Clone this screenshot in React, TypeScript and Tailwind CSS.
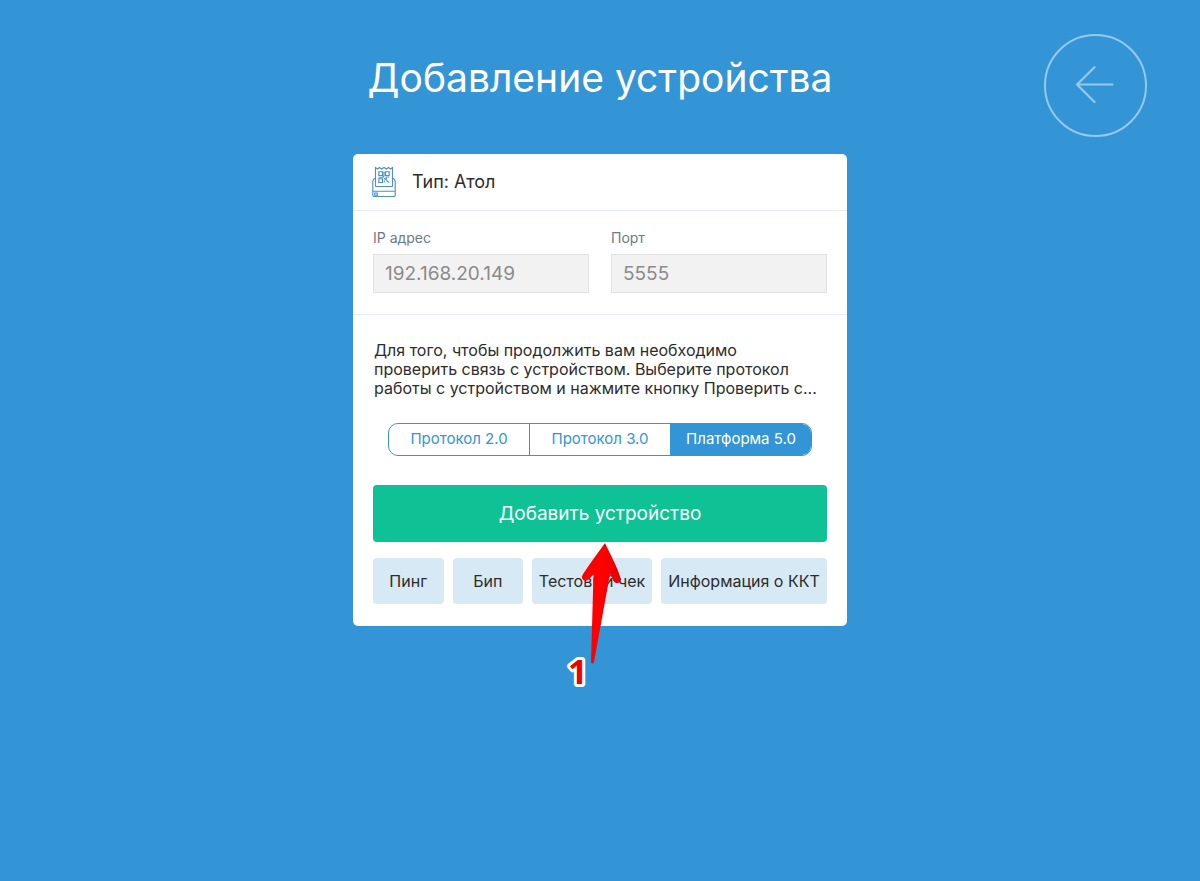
import React, { useState } from 'react';

const protocols = ['Протокол 2.0', 'Протокол 3.0', 'Платформа 5.0'];

const PrinterIcon: React.FC = () => (
  <svg className="h-8 w-6 shrink-0" viewBox="0 0 24 32" fill="none" stroke="#4a8fc9" strokeWidth="1.1" aria-hidden="true">
    {/* Paper with the torn edge */}
    <path d="M3.5 20.5V1.5l2 1.5 2-1.5 2 1.5 2.5-1.5L14.5 3l2-1.5 2 1.5 2-1.5v19" />
    {/* Body */}
    <path d="M3.5 12.5H2.3L.8 15v14.2c0 .8.6 1.3 1.4 1.3h19.6c.8 0 1.4-.5 1.4-1.3V15l-1.5-2.5h-1.2M3.5 20.5h17M.8 25.2h22.4" />
    <path d="M2.7 27h2.6v2.2H2.7z" />
    {/* QR code */}
    <path
      d="M6.8 5.8h3.7v3.7H6.8zM13.5 5.8h3.7v3.7h-3.7zM6.8 12.8h3.7v3.7H6.8zM12 5.5v4.5l-1.5 1.5M6.5 11.2h4M12 12.3l2.2 1.7v-3h3M14.5 14.5l2.5 2.2M12.3 14.5v2"
      strokeWidth="1.1"
    />
  </svg>
);

const BackButton: React.FC = () => (
  <button
    type="button"
    aria-label="Назад"
    className="flex h-[103px] w-[103px] items-center justify-center justify-self-end rounded-full border-2 border-[#95c9ec] text-[#95c9ec]"
  >
    <svg className="h-10 w-10" viewBox="0 0 40 40" fill="none" stroke="currentColor" strokeWidth="2.2" strokeLinecap="round" aria-hidden="true">
      <path d="M36.5 18.5H1M18.5 1.2L1 18.5l17.5 17.5" />
    </svg>
  </button>
);

interface FieldProps {
  id: string;
  label: string;
  value: string;
}

const Field: React.FC<FieldProps> = ({ id, label, value }) => (
  <div className="min-w-0 flex-1">
    <label htmlFor={id} className="block text-sm leading-5 text-[#6b7b85]">
      {label}
    </label>
    <input
      id={id}
      type="text"
      defaultValue={value}
      readOnly
      className="mt-1.5 block h-[39px] w-full border border-[#e2e2e2] bg-[#f2f2f2] px-[11px] text-[19px] text-[#8b8b8b] outline-none"
    />
  </div>
);

const App: React.FC = () => {
  const [protocol, setProtocol] = useState('Платформа 5.0');

  return (
    <div className="min-h-screen bg-[#3395d6] pb-10 font-['Inter','Liberation_Sans',sans-serif] text-[#2c2c2c]">
      <header className="grid grid-cols-[1fr_auto_1fr] items-start px-[53px] pt-[34px]">
        <h1 className="col-start-2 mt-5 text-[39px] leading-[48px] text-white">Добавление устройства</h1>
        <BackButton />
      </header>

      <main className="relative mx-auto mt-[17px] w-full max-w-[494px] rounded-[5px] bg-white">
        <div className="flex h-[57px] items-center gap-4 border-b border-[#e3eff7] px-[19px]">
          <PrinterIcon />
          <h2 className="text-lg leading-6">Тип: Атол</h2>
        </div>

        <div className="flex gap-[22px] border-b border-[#e3eff7] px-5 pt-[17px] pb-[21px]">
          <Field id="ip" label="IP адрес" value="192.168.20.149" />
          <Field id="port" label="Порт" value="5555" />
        </div>

        <div className="px-5 pt-[26px] pb-[22px]">
          <p className="px-px text-base leading-[19px] whitespace-nowrap">
            Для того, чтобы продолжить вам необходимо
            <br />
            проверить связь с устройством. Выберите протокол
            <br />
            работы с устройством и нажмите кнопку Проверить с...
          </p>

          {/* Protocol switch */}
          <div className="mx-[15px] mt-[25px] flex h-[33px] divide-x divide-[#3395d6] overflow-hidden rounded-[10px] border border-[#3395d6]">
            {protocols.map((name) => (
              <button
                key={name}
                type="button"
                aria-pressed={name === protocol}
                onClick={() => setProtocol(name)}
                className={
                  name === protocol
                    ? 'flex-1 bg-[#3395d6] text-[15px] whitespace-nowrap text-white'
                    : 'flex-1 text-[15px] whitespace-nowrap text-[#3395d6]'
                }
              >
                {name}
              </button>
            ))}
          </div>

          <button type="button" className="mt-[29px] h-[57px] w-full rounded bg-[#0fc296] pt-0.5 text-[19px] text-white">
            Добавить устройство
          </button>

          <div className="mt-4 flex h-[46px] gap-[9px] text-base whitespace-nowrap">
            <button type="button" className="flex-1 rounded-sm bg-[#d6e9f5]">Пинг</button>
            <button type="button" className="flex-1 rounded-sm bg-[#d6e9f5]">Бип</button>
            <button type="button" className="w-[120px] rounded-sm bg-[#d6e9f5]">Тестовый чек</button>
            <button type="button" className="w-[166px] rounded-sm bg-[#d6e9f5]">Информация о ККТ</button>
          </div>
        </div>

        {/* Step marker pointing at the main button */}
        <svg className="pointer-events-none absolute top-[389px] left-[212px] h-[164px] w-[60px] overflow-visible" viewBox="0 0 60 164">
          <defs>
            <linearGradient id="arrow" x1="0" x2="1" y1="0" y2="0">
              <stop offset="0.5" stopColor="#ff0000" />
              <stop offset="1" stopColor="#e60000" />
            </linearGradient>
          </defs>
          <path
            d="M40 0C33 10 25 20 17.8 31.5C15 36 20 40 24 36L28.5 31.5L26 119Q27 122 29 119L45 31L48.5 38C51 42 57 39.500 55.500 35C52 23 45 11 40 0Z"
            fill="url(#arrow)"
          />
          <text
            x="3"
            y="141"
            fill="#f00000"
            stroke="white"
            strokeWidth="6"
            strokeLinejoin="round"
            className="font-['Open_Sans',sans-serif] text-[34px] font-bold [paint-order:stroke]"
          >
            1
          </text>
        </svg>
      </main>
    </div>
  );
};

export default App;
